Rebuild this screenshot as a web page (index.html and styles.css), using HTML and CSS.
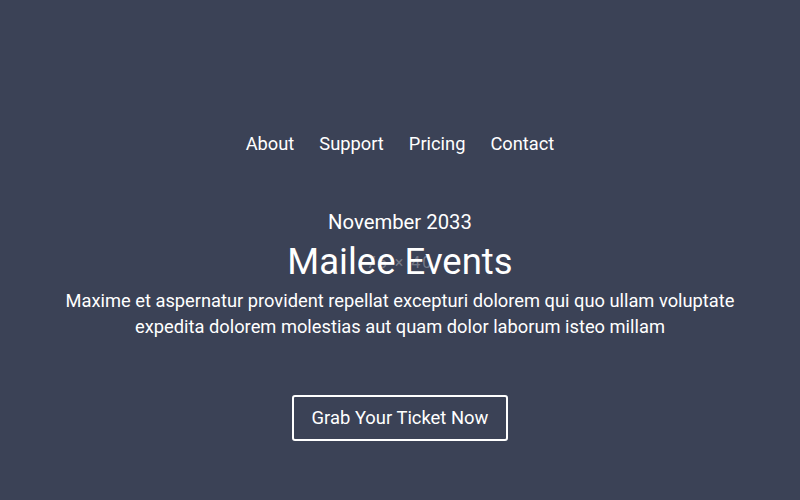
FILE: index.html
```html
<!DOCTYPE html>
<html lang="en">
<head>
    <meta charset="UTF-8">
    <meta name="viewport" content="width=device-width, initial-scale=1.0">
    <title>Mailee Events</title>
    <link rel="stylesheet" href="styles.css">
</head>
<body>
    <div class="hero">
        <nav class="nav">
            <a href="#">About</a>
            <a href="#">Support</a>
            <a href="#">Pricing</a>
            <a href="#">Contact</a>
        </nav>
        <div class="content">
            <p class="date">November 2033</p>
            <div class="title-wrap">
                <span class="logo-alt">75 × 40</span>
                <h1>Mailee Events</h1>
            </div>
            <p class="lead">Maxime et aspernatur provident repellat excepturi dolorem qui quo ullam voluptate expedita dolorem molestias aut quam dolor laborum isteo millam</p>
            <a href="#" class="button">Grab Your Ticket Now</a>
        </div>
    </div>
</body>
</html>
```

FILE: styles.css
```css
body {
    margin: 0;
    padding: 0;
    font-family: Roboto, "Liberation Sans", sans-serif;
    background-color: #3b4256;
    color: #fff;
}
.hero {
    height: 500px;
    display: flex;
    flex-direction: column;
    align-items: center;
    padding-top: 131px;
    box-sizing: border-box;
}
.nav {
    display: flex;
    gap: 25px;
}
.nav a {
    color: #fff;
    text-decoration: none;
    font-size: 18.3px;
    line-height: 26px;
}
.content {
    margin-top: 51px;
    text-align: center;
    display: flex;
    flex-direction: column;
    align-items: center;
}
.date {
    margin: 0;
    font-size: 20.3px;
    line-height: 28px;
}
.title-wrap {
    position: relative;
}
.logo-alt {
    position: absolute;
    left: 50%;
    top: 50%;
    transform: translate(-50%, -50%);
    font-size: 16px;
    letter-spacing: 2px;
    color: rgba(255, 255, 255, 0.3);
    white-space: nowrap;
}
h1 {
    position: relative;
    margin: 0;
    font-size: 36.5px;
    font-weight: 400;
    line-height: 52px;
}
.lead {
    margin: 0;
    width: 700px;
    font-size: 18.3px;
    line-height: 26px;
}
.button {
    margin-top: 55px;
    display: inline-block;
    padding: 10px 18px;
    border: 2px solid #fff;
    border-radius: 3px;
    color: #fff;
    text-decoration: none;
    font-size: 18.4px;
    line-height: 22px;
}
```
